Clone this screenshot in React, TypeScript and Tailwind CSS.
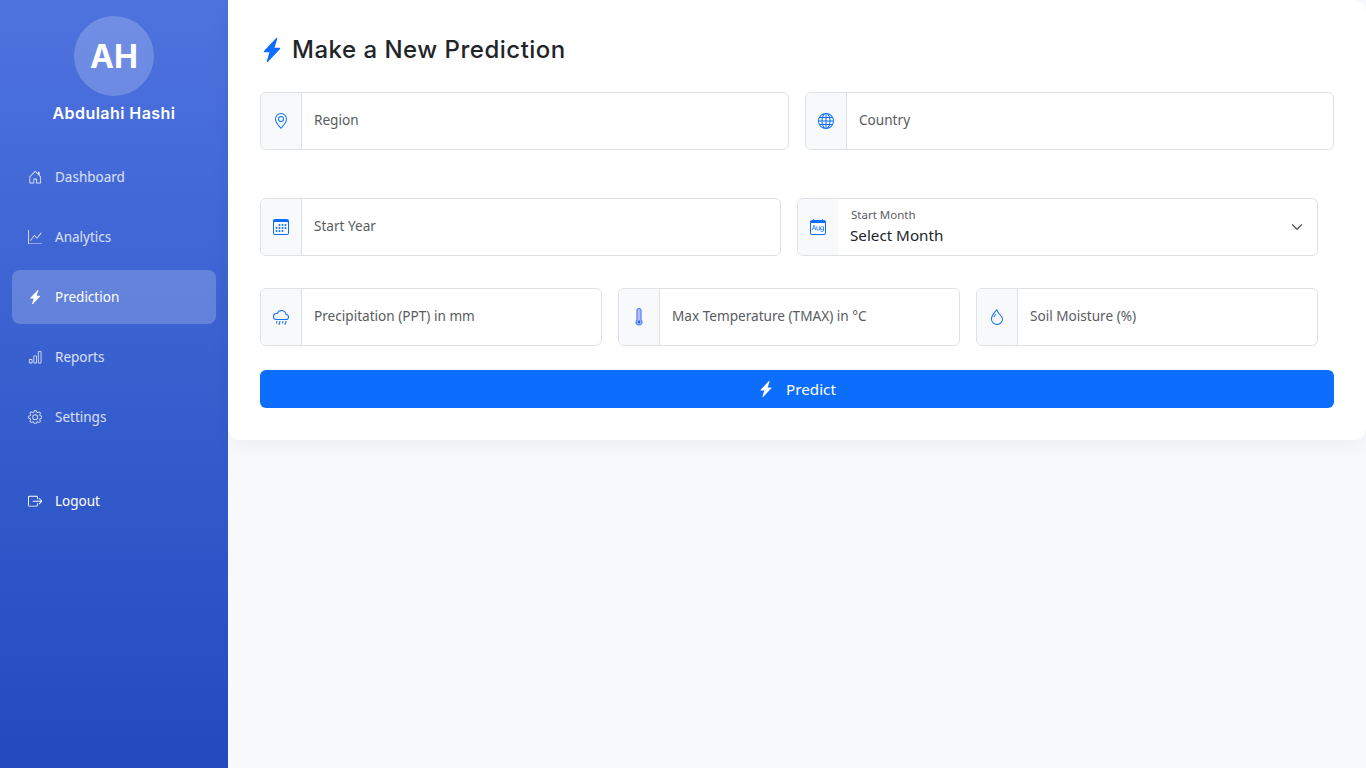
import type { ReactNode } from 'react';
import {
  BsBarChart,
  BsBoxArrowRight,
  BsCalendar3,
  BsCalendarMonth,
  BsChevronDown,
  BsCloudRain,
  BsDroplet,
  BsGear,
  BsGeoAlt,
  BsGlobe,
  BsGraphUp,
  BsHouseDoor,
  BsLightningChargeFill,
} from 'react-icons/bs';

const navItems = [
  { label: 'Dashboard', icon: <BsHouseDoor /> },
  { label: 'Analytics', icon: <BsGraphUp /> },
  { label: 'Prediction', icon: <BsLightningChargeFill />, active: true },
  { label: 'Reports', icon: <BsBarChart /> },
  { label: 'Settings', icon: <BsGear /> },
];

function ThermometerIcon() {
  return (
    <svg width="16" height="20" viewBox="0 0 16 20" fill="none">
      <path
        d="M6 3.5a2 2 0 0 1 4 0v9.3a3 3 0 1 1-4 0z"
        fill="#c4b5fd"
        stroke="#3b82f6"
        strokeWidth="1.1"
      />
      <circle cx="8" cy="15" r="1.4" fill="#0d6efd" />
    </svg>
  );
}

function NavItem({ label, icon, active }: { label: string; icon: ReactNode; active?: boolean }) {
  return (
    <a
      className={`flex h-[54px] items-center rounded-lg px-4 text-[13.5px] ${
        active ? 'bg-white/20 text-white' : 'text-white/80'
      }`}
    >
      <span className="flex w-[27px] text-[14.4px]">{icon}</span>
      {label}
    </a>
  );
}

function Field({ icon, placeholder }: { icon: ReactNode; placeholder: string }) {
  return (
    <div className="flex h-[58px] min-w-0 flex-1 rounded-md border border-[#dee2e6] bg-white">
      <span className="flex w-[41px] shrink-0 items-center justify-center rounded-l-md border-r border-[#dee2e6] bg-[#f8f9fa] text-[16px] text-[#0d6efd]">
        {icon}
      </span>
      <input
        placeholder={placeholder}
        className="min-w-0 flex-1 bg-transparent px-3 pb-[1px] text-[13.6px] text-[#212529] outline-none placeholder:text-[#595c5f]"
      />
    </div>
  );
}

export default function App() {
  return (
    <div className="flex min-h-screen bg-[#f8f9fc] font-['Noto_Sans',sans-serif]">
      {/* Sidebar */}
      <aside className="flex w-[228px] shrink-0 flex-col bg-gradient-to-b from-[#4e73df] to-[#224abe] px-3 pt-4">
        <div className="flex flex-col items-center">
          <div className="flex h-20 w-20 items-center justify-center rounded-full bg-white/20 pt-[2px] font-['Inter',sans-serif] text-[32px] font-bold text-white">
            AH
          </div>
          <h2 className="mt-[5px] font-['Inter',sans-serif] text-[16px] leading-6 font-semibold tracking-[0.45px] text-white">
            Abdulahi Hashi
          </h2>
        </div>

        <nav className="mt-[25px] flex flex-col gap-[6px]">
          {navItems.map((item) => (
            <NavItem key={item.label} {...item} />
          ))}
        </nav>

        <a className="mt-[30px] flex h-[54px] items-center px-4 text-[13.5px] text-white">
          <span className="flex w-[27px] text-[14.4px]">
            <BsBoxArrowRight />
          </span>
          Logout
        </a>
      </aside>

      {/* Main */}
      <main className="min-w-0 flex-1">
        <section className="rounded-b-xl rounded-r-xl bg-white px-8 pt-[32px] pb-8 shadow-[0_4px_20px_rgba(0,0,0,0.05)]">
          <h1 className="flex h-9 items-center font-['Inter',sans-serif] text-[24px] font-medium tracking-[0.5px] text-[#212529]">
            <BsLightningChargeFill className="mr-2 text-[#0d6efd]" />
            Make a New Prediction
          </h1>

          <form className="mt-6">
            <div className="flex gap-4">
              <Field icon={<BsGeoAlt />} placeholder="Region" />
              <Field icon={<BsGlobe />} placeholder="Country" />
            </div>

            <div className="mt-12 flex gap-4 pr-4">
              <Field icon={<BsCalendar3 />} placeholder="Start Year" />
              <div className="flex h-[58px] min-w-0 flex-1 rounded-md border border-[#dee2e6] bg-white">
                <span className="flex w-10 shrink-0 items-center justify-center rounded-l-md bg-[#f8f9fa] text-[16px] text-[#0d6efd]">
                  <BsCalendarMonth />
                </span>
                <div className="flex flex-1 items-center pr-[14px] pl-3">
                  <div className="flex-1">
                    <div className="pl-px text-[11.5px] leading-4 text-[#595c5f]">Start Month</div>
                    <div className="text-[15.2px] leading-6 text-[#212529]">Select Month</div>
                  </div>
                  <BsChevronDown className="stroke-[0.7px] text-[12px] text-[#343a40]" />
                </div>
              </div>
            </div>

            <div className="mt-8 flex gap-4 pr-4">
              <Field icon={<BsCloudRain />} placeholder="Precipitation (PPT) in mm" />
              <Field icon={<ThermometerIcon />} placeholder="Max Temperature (TMAX) in °C" />
              <Field icon={<BsDroplet />} placeholder="Soil Moisture (%)" />
            </div>

            <button
              type="button"
              className="mt-6 flex h-[38px] w-full items-center justify-center rounded-md bg-[#0d6efd] text-[15.2px] text-white"
            >
              <BsLightningChargeFill className="mr-3 text-[16px]" />
              Predict
            </button>
          </form>
        </section>
      </main>
    </div>
  );
}
